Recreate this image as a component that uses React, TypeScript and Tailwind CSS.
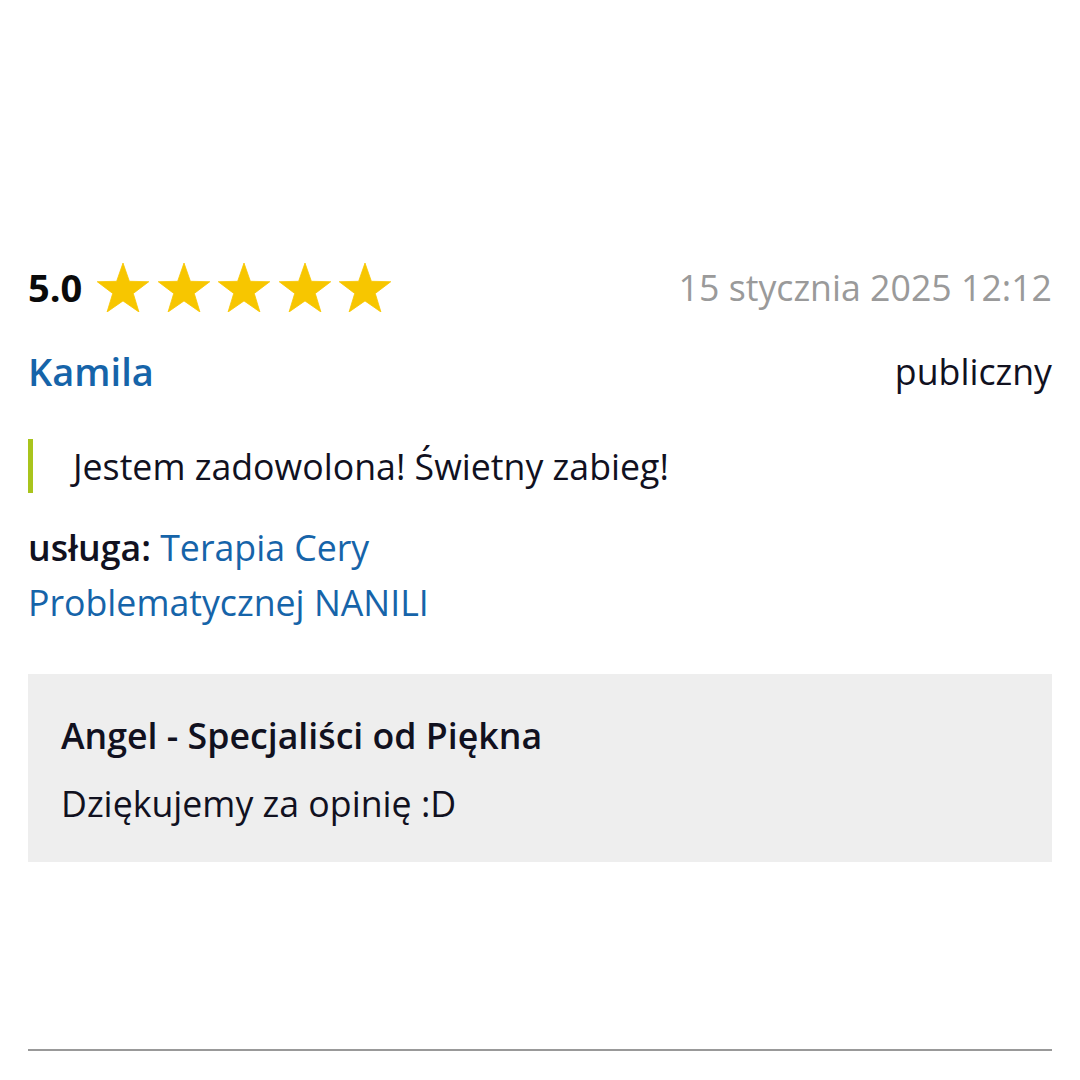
import React from "react";

const Star = () => (
  <svg width="52" height="49" viewBox="-0.951 -1 1.902 1.809" className="shrink-0">
    <path
      d="M0,-1 L0.235,-0.324 L0.951,-0.309 L0.380,0.124 L0.588,0.809 L0,0.4 L-0.588,0.809 L-0.380,0.124 L-0.951,-0.309 L-0.235,-0.324 Z"
      fill="#f7c600"
      stroke="#f7c600"
      strokeWidth="0.03"
      strokeLinejoin="round"
    />
  </svg>
);

export default function App() {
  return (
    <div
      className="w-[1080px] h-[1080px] bg-white text-[#11111f] px-[28px] pt-[259px] flex flex-col"
      style={{ fontFamily: '"Open Sans", sans-serif' }}
    >
      <div className="flex items-center justify-between h-[56px]">
        <div className="flex items-center">
          <span className="text-[38px] font-bold leading-[54px] text-[#0a0a0a]">5.0</span>
          <div className="flex items-center gap-[8.5px] ml-[15px]">
            <Star />
            <Star />
            <Star />
            <Star />
            <Star />
          </div>
        </div>
        <span className="text-[35.7px] leading-[54px] text-[#9a9a9a]">15 stycznia 2025 12:12</span>
      </div>
      <div className="flex items-center justify-between mt-[29px]">
        <span className="text-[38px] font-semibold leading-[54px] text-[#1664a9]">Kamila</span>
        <span className="text-[35.7px] leading-[54px]">publiczny</span>
      </div>
      <div className="mt-[41px] border-l-[5px] border-[#a9c41c] pl-[40px] h-[54px] flex items-center">
        <span className="text-[35.7px] leading-[54px]">Jestem zadowolona! Świetny zabieg!</span>
      </div>
      <div className="mt-[27px] text-[35.7px] leading-[55px] w-[500px]">
        <span className="font-semibold">usługa:</span>{" "}
        <span className="text-[#1664a9]">Terapia Cery Problematycznej NANILI</span>
      </div>
      <div className="mt-[44px] bg-[#eeeeee] h-[188px] px-[33px] pt-[37px]">
        <div className="text-[35.7px] font-semibold leading-[48px]">Angel - Specjaliści od Piękna</div>
        <div className="text-[35.7px] leading-[48px] mt-[20px]">Dziękujemy za opinię :D</div>
      </div>
      <div className="mt-[187px] h-[2px] bg-[#999999]" />
    </div>
  );
}
